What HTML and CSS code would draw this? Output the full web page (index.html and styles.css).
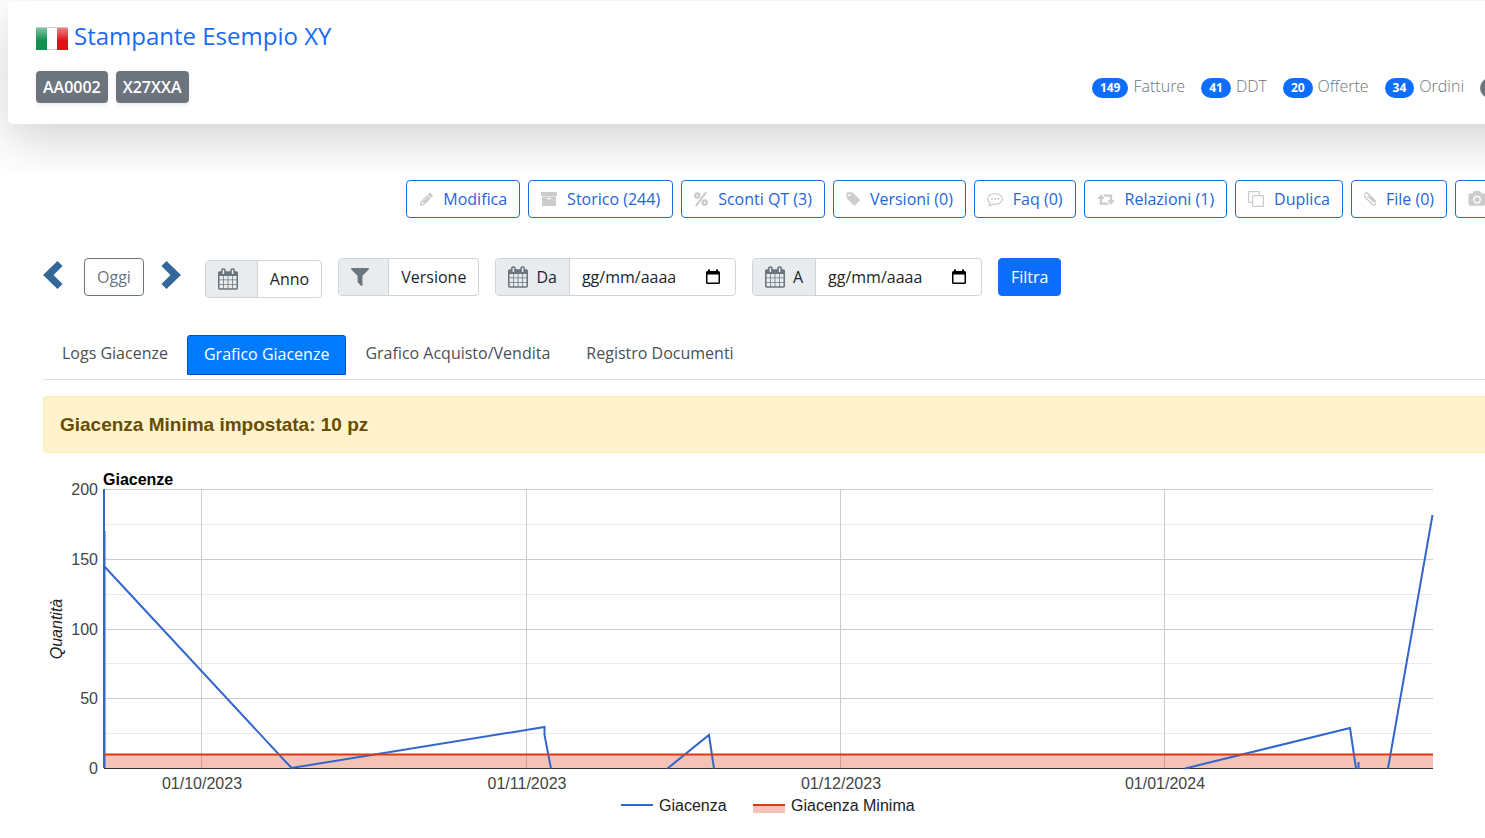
FILE: index.html
```html
<!DOCTYPE html>
<html lang="it">
<head>
<meta charset="utf-8">
<title>Stampante Esempio XY</title>
<link rel="stylesheet" href="styles.css">
</head>
<body>
<header class="top">
  <div class="card">
    <h1 class="title">
      <svg class="flag" viewBox="0 0 32 24" aria-hidden="true">
        <defs>
          <linearGradient id="shine" x1="0" y1="0" x2="0" y2="1">
            <stop offset="0" stop-color="#fff" stop-opacity=".5"/>
            <stop offset=".6" stop-color="#fff" stop-opacity="0"/>
          </linearGradient>
        </defs>
        <rect width="11" height="23" fill="#0f9150"/>
        <rect x="11" width="10" height="23" fill="#fdfdfd"/>
        <rect x="21" width="11" height="23" fill="#dd1218"/>
        <rect width="32" height="23" fill="url(#shine)"/>
        <path d="M0 .5h32M11 22.500h10" stroke="#ccc" fill="none"/>
      </svg>
      <a href="#">Stampante Esempio XY</a>
    </h1>
    <div class="meta">
      <div class="codes"><span class="code">AA0002</span><span class="code">X27XXA</span></div>
      <div class="stats">
        <span class="stat"><b class="pill">149</b>Fatture</span>
        <span class="stat"><b class="pill">41</b>DDT</span>
        <span class="stat"><b class="pill">20</b>Offerte</span>
        <span class="stat"><b class="pill">34</b>Ordini</span>
        <span class="stat"><b class="pill pill-muted"></b></span>
      </div>
    </div>
  </div>
</header>

<nav class="toolbar">
  <button class="tool"><svg class="i14" viewBox="0 0 1664 1792"><path d="M491 1536l91-91-235-235-91 91v107h128v128h107zm523-928q0-22-22-22-10 0-17 7l-542 542q-7 7-7 17 0 22 22 22 10 0 17-7l542-542q7-7 7-17zm-54-192l416 416-832 832h-416v-416zm683 96q0 53-37 90l-166 166-416-416 166-165q36-38 90-38 53 0 91 38l235 234q37 39 37 91z"/></svg>Modifica</button>
  <button class="tool"><svg class="i16" viewBox="0 0 16 16"><path d="M0 1h16v4H0zM1 5.400h14v9.600H1zM6 7v1.200h4V7z" fill-rule="evenodd"/></svg>Storico (244)</button>
  <button class="tool"><svg class="i14" viewBox="0 0 14 16"><g fill="none" stroke="#ccc" stroke-width="2.400"><circle cx="3.300" cy="4.600" r="2.100"/><circle cx="10.700" cy="11.600" r="2.100"/><path d="M11.700 1.800L2.300 14.400" stroke-width="2" stroke-linecap="round"/></g></svg>Sconti QT (3)</button>
  <button class="tool"><svg class="i14" viewBox="64 64 1600 1664"><path d="M576 448q0-53-37.500-90.500t-90.500-37.500-90.500 37.500-37.500 90.500 37.500 90.500 90.500 37.500 90.500-37.500 37.500-90.500zm1067 576q0 53-37 90l-491 492q-39 37-91 37-53 0-90-37l-715-716q-38-37-64.500-101t-26.500-117v-416q0-52 38-90t90-38h416q53 0 117 26.500t102 64.500l715 714q37 39 37 91z"/></svg>Versioni (0)</button>
  <button class="tool"><svg class="i16" viewBox="0 0 16 16"><path d="M8 2.600c4.200 0 7.400 2.400 7.400 5.400s-3.200 5.400-7.400 5.400c-.7 0-1.400-.1-2-.2-1.100.9-2.500 1.400-4 1.500.8-.8 1.200-1.600 1.300-2.600C1.600 11.100.6 9.600.6 8c0-3 3.200-5.400 7.400-5.400z" fill="none" stroke="#ccc" stroke-width="1.200"/><circle cx="4.800" cy="7.800" r="1.100"/><circle cx="8" cy="7.800" r="1.100"/><circle cx="11.200" cy="7.800" r="1.100"/></svg>Faq (0)</button>
  <button class="tool"><svg class="i18" viewBox="0 0 2048 1792"><path d="M1344 1504q0 13-9.500 22.500t-22.500 9.500h-960q-8 0-13.500-2t-9-7-5.500-8-3-11.500-1-11.500v-600h-192q-26 0-45-19t-19-45q0-24 15-41l320-384q19-22 49-22t49 22l320 384q15 17 15 41 0 26-19 45t-45 19h-192v384h576q16 0 25 11l160 192q7 10 7 21zm640-416q0 24-15 41l-320 384q-20 23-49 23t-49-23l-320-384q-15-17-15-41 0-26 19-45t45-19h192v-384h-576q-16 0-25-12l-160-192q-7-9-7-20 0-13 9.500-22.500t22.500-9.500h960q8 0 13.500 2t9 7 5.500 8 3 11.500 1 11.500v600h192q26 0 45 19t19 45z"/></svg>Relazioni (1)</button>
  <button class="tool"><svg class="i16" viewBox="0 0 16 16"><g fill="none" stroke="#ccc" stroke-width="1.200"><path d="M4 11.400H1.200a.6.600 0 0 1-.6-.6V1.200a.6.600 0 0 1 .6-.6h9.600a.6.600 0 0 1 .6.600V4"/><rect x="4.600" y="4.600" width="10.800" height="10.800" rx=".6"/></g></svg>Duplica</button>
  <button class="tool"><svg class="i12" viewBox="1 1 12 14"><path d="M3.200 7.700l5.600 5.600c1.200 1.200 2.700 1.100 3.600.2s.9-2.300-.2-3.400L5.300 3.200C4.200 2.100 2.600 2.100 1.700 3s-.9 2.400.1 3.400M5 5.700l5 5c.9.900 1.900.1 1.200-.8L7.400 6.100M1.800 6.400l1.800 1.800" transform="translate(0 -.4)" fill="none" stroke="#ccc" stroke-width="1.400" stroke-linecap="round"/></svg>File (0)</button>
  <button class="tool" aria-label="Foto"><svg class="i18" viewBox="0 0 1920 1792"><path d="M960 672q119 0 203.500 84.500t84.500 203.500-84.500 203.500-203.500 84.500-203.500-84.500-84.500-203.500 84.500-203.500 203.500-84.500zm704-416q106 0 181 75t75 181v896q0 106-75 181t-181 75h-1408q-106 0-181-75t-75-181v-896q0-106 75-181t181-75h224l51-136q19-49 69.500-84.500t103.500-35.500h512q53 0 103.500 35.500t69.500 84.500l51 136h224zm-704 1152q185 0 316.500-131.500t131.500-316.500-131.500-316.500-316.500-131.500-316.500 131.500-131.500 316.500 131.500 316.500 316.500 131.500z"/></svg></button>
</nav>

<svg class="defs" aria-hidden="true">
  <symbol id="calendar" viewBox="64 0 1664 1792"><path d="M192 1664h288v-288h-288v288zm352 0h320v-288h-320v288zm-352-352h288v-320h-288v320zm352 0h320v-320h-320v320zm-352-384h288v-288h-288v288zm736 736h320v-288h-320v288zm-384-736h320v-288h-320v288zm768 736h288v-288h-288v288zm-384-352h320v-320h-320v320zm-352-864v-288q0-13-9.500-22.500t-22.500-9.500h-64q-13 0-22.500 9.500t-9.500 22.500v288q0 13 9.500 22.500t22.500 9.500h64q13 0 22.500-9.500t9.500-22.500zm736 864h288v-320h-288v320zm-384-384h320v-288h-320v288zm384 0h288v-288h-288v288zm32-480v-288q0-13-9.500-22.500t-22.500-9.500h-64q-13 0-22.500 9.500t-9.500 22.500v288q0 13 9.500 22.500t22.500 9.500h64q13 0 22.500-9.500t9.500-22.500zm384-64v1280q0 52-38 90t-90 38h-1408q-52 0-90-38t-38-90v-1280q0-52 38-90t90-38h128v-96q0-66 47-113t113-47h64q66 0 113 47t47 113v96h384v-96q0-66 47-113t113-47h64q66 0 113 47t47 113v96h128q52 0 90 38t38 90z"/></symbol>
  <symbol id="picker" viewBox="0 0 14 16"><path d="M0 3.500A1.500 1.500 0 0 1 1.500 2H2V.5h2V2h6V.5h2V2h.5A1.500 1.500 0 0 1 14 3.500v10a1.500 1.500 0 0 1-1.500 1.500h-11A1.500 1.500 0 0 1 0 13.500zM1.500 5.500v8h11v-8z" fill-rule="evenodd"/></symbol>
</svg>

<main class="content">
  <form class="filters">
    <div class="pager">
      <button type="button" class="arrow" aria-label="Precedente"><svg viewBox="0 0 20 30"><path d="M14.500 1L19.500 6 10.500 15l9 9-5 5L0 15z"/></svg></button>
      <button type="button" class="today">Oggi</button>
      <button type="button" class="arrow" aria-label="Successivo"><svg viewBox="0 0 20 30"><path d="M5.500 1L.5 6l9 9-9 9 5 5L20 15z"/></svg></button>
    </div>
    <div class="group group-year">
      <span class="addon addon-icon"><svg class="cal"><use href="#calendar"/></svg></span>
      <button type="button" class="pick">Anno</button>
    </div>
    <div class="group">
      <span class="addon addon-icon"><svg class="funnel" viewBox="192 256 1408 1408"><path d="M1595 295q17 41-14 70l-493 493v742q0 42-39 59-13 5-25 5-27 0-45-19l-256-256q-19-19-19-45v-486l-493-493q-31-29-14-70 17-39 59-39h1280q42 0 59 39z"/></svg></span>
      <button type="button" class="pick">Versione</button>
    </div>
    <div class="group">
      <label class="addon" for="from"><svg class="cal"><use href="#calendar"/></svg>Da</label>
      <input class="date" id="from" type="text" placeholder="gg/mm/aaaa">
      <button type="button" class="open" aria-label="Apri calendario"><svg><use href="#picker"/></svg></button>
    </div>
    <div class="group">
      <label class="addon" for="to"><svg class="cal"><use href="#calendar"/></svg>A</label>
      <input class="date" id="to" type="text" placeholder="gg/mm/aaaa">
      <button type="button" class="open" aria-label="Apri calendario"><svg><use href="#picker"/></svg></button>
    </div>
    <button type="submit" class="submit">Filtra</button>
  </form>

  <nav class="tabs">
    <a class="tab" href="#">Logs Giacenze</a>
    <a class="tab active" href="#">Grafico Giacenze</a>
    <a class="tab" href="#">Grafico Acquisto/Vendita</a>
    <a class="tab" href="#">Registro Documenti</a>
  </nav>

  <p class="alert">Giacenza Minima impostata: 10 pz</p>

  <svg class="chart" viewBox="43 466 1442 354" role="img" aria-label="Giacenze">
    <g class="grid-minor"><path d="M104 524.500H1433M104 594.500H1433M104 663.500H1433M104 733.500H1433"/></g>
    <g class="grid"><path d="M104 489.500H1433M104 559.500H1433M104 629.500H1433M104 698.500H1433M201.500 489V768M526.500 489V768M840.500 489V768M1164.500 489V768"/></g>
    <path class="min-area" d="M104 754.500H1433V768.500H104z"/>
    <path class="axis" d="M104 768.500H1433"/>
    <path class="line" d="M104 489V768M104.500 531V768M104 566L291.500 768 544.500 727V735L551 768.500M667.500 768.500L709 735 714 768.500M1185 768.500L1350 728 1356 768.500M1358.500 768.500V762M1388 768.500L1432.500 515"/>
    <path class="min-line" d="M104 754.500H1433"/>
    <text class="chart-title" x="103" y="485">Giacenze</text>
    <g class="labels end">
      <text x="98" y="495">200</text><text x="98" y="565">150</text><text x="98" y="635">100</text><text x="98" y="704">50</text><text x="98" y="774">0</text>
    </g>
    <g class="labels mid">
      <text x="202" y="789">01/10/2023</text><text x="527" y="789">01/11/2023</text><text x="841" y="789">01/12/2023</text><text x="1165" y="789">01/01/2024</text>
    </g>
    <text class="axis-title" transform="translate(62 629) rotate(-90)">Quantità</text>
    <path class="line" d="M621 805H653"/>
    <text class="legend" x="659" y="811">Giacenza</text>
    <path class="min-area" d="M753 805H785V813H753z"/>
    <path class="min-line" d="M753 805H785"/>
    <text class="legend" x="791" y="811">Giacenza Minima</text>
  </svg>
</main>
</body>
</html>
```

FILE: styles.css
```css
* { box-sizing: border-box; }
body {
  margin: 0;
  overflow-x: hidden;
  background: #fff;
  color: #212529;
  font: 400 16px/24px "Open Sans", sans-serif;
}
button, input { font: inherit; color: inherit; margin: 0; }
a { text-decoration: none; }
.defs { position: absolute; width: 0; height: 0; }

.top { overflow: hidden; padding: 1px 0 48px 8px; }
.card {
  margin-right: -52px;
  padding: 19px 28px 21px;
  border-radius: 4px;
  background: #fff;
  box-shadow: 0 16px 48px rgba(0, 0, 0, .175);
}
.title {
  display: flex;
  align-items: center;
  gap: 6px;
  margin: 0 0 19px;
  font-size: 24px;
  font-weight: 500;
  line-height: 32px;
}
.title a { color: #1a6af4; }
.flag { width: 32px; height: 24px; margin-top: 6px; }
.meta { display: flex; justify-content: space-between; align-items: center; }
.codes { display: flex; gap: 8px; }
.code {
  padding: 4px 7px;
  border-radius: 4px;
  background: #6c757d;
  box-shadow: 0 2px 4px rgba(0, 0, 0, .075);
  color: #fff;
  font-size: 16px;
  font-weight: 600;
}
.stats { display: flex; gap: 16px; color: #6c757d; font-weight: 300; padding-bottom: 2px; }
.stat { display: flex; align-items: center; gap: 5px; }
.pill {
  min-width: 29px;
  height: 20px;
  margin-top: 4px;
  padding: 0 8px;
  border-radius: 10px;
  background: #0d6efd;
  color: #fff;
  font-size: 12px;
  font-weight: 700;
  line-height: 20px;
}
.pill-muted { background: #6c757d; }

.toolbar {
  display: flex;
  justify-content: flex-end;
  gap: 8px;
  margin: 8px -15px 40px 0;
}
.tool {
  display: flex;
  flex: none;
  align-items: center;
  gap: 10px;
  padding: 6px 12px;
  border: 1px solid #1f6fd0;
  border-radius: 4px;
  background: #fff;
  color: #2465dc;
  white-space: nowrap;
}
.tool svg { height: 16px; fill: #ccc; }
.tool .i12 { width: 12px; }
.tool .i14 { width: 14px; }
.tool .i16 { width: 16px; }
.tool .i18 { width: 18px; }
.tool:last-child { padding-right: 13px; }

.content { padding-left: 43px; }
.filters { display: flex; align-items: flex-start; gap: 16px; }
.pager { display: flex; align-items: center; gap: 17px; margin-right: 8px; }
.arrow { width: 20px; height: 30px; padding: 0; border: 0; background: none; margin-bottom: 4px; }
.arrow svg { display: block; width: 20px; height: 30px; fill: #369; }
.arrow:first-child { margin-right: 4px; }
.today {
  padding: 6px 12px;
  border: 1px solid #6c757d;
  border-radius: 4px;
  background: #fff;
  color: #6c757d;
}
.group {
  display: flex;
  height: 38px;
  border: 1px solid #ced4da;
  border-radius: 4px;
  background: #fff;
  overflow: hidden;
}
.group-year { margin-top: 2px; }
.addon {
  display: flex;
  align-items: center;
  gap: 8px;
  padding: 0 12px;
  border-right: 1px solid #ced4da;
  background: #e9ecef;
}
.addon-icon { min-width: 50px; }
.group-year .addon-icon { min-width: 52px; }
.cal { width: 20px; height: 22px; fill: #6c757d; }
.funnel { width: 18px; height: 18px; fill: #6c757d; }
.pick { padding: 0 12px; border: 0; background: none; }
.date { width: 130px; padding: 0 12px; border: 0; outline: 0; background: none; }
.date::placeholder { color: #212529; opacity: 1; }
.open { width: 35px; padding: 0 0 0 6px; border: 0; background: none; }
.open svg { display: block; width: 14px; height: 16px; fill: #000; }
.submit {
  padding: 6px 12px;
  border: 1px solid #0d6efd;
  border-radius: 4px;
  background: #0d6efd;
  color: #fff;
}

.tabs {
  display: flex;
  align-items: flex-start;
  gap: 2px;
  margin: 37px 0 16px;
  padding: 0 2px 4px;
  border-bottom: 1px solid #dee2e6;
}
.tab { padding: 5px 16px; border: 1px solid transparent; color: #495057; }
.tab.active {
  padding: 6px 16px 8px;
  border-color: #0550c8;
  border-radius: 3px 3px 0 0;
  background: #007bff;
  color: #fff;
}
.alert {
  margin: 0 0 13px;
  padding: 16px;
  border: 1px solid #ffecb5;
  border-right: 0;
  border-radius: 4px 0 0 4px;
  background: #fff3cd;
  color: #664d03;
  font: 700 19px/23px "Liberation Sans", Arial, sans-serif;
}

.chart {
  display: block;
  width: 100%;
  font: 16px "Liberation Sans", Arial, sans-serif;
  fill: #222;
}
.chart path { fill: none; }
.grid path { stroke: #ccc; }
.grid-minor path { stroke: #ebebeb; }
.chart .line { stroke: #36c; stroke-width: 2; }
.chart .min-line { stroke: #dc3912; stroke-width: 2; }
.chart .min-area { fill: #dc3912; fill-opacity: .3; }
.axis { stroke: #333; }
.chart-title { font-weight: 700; fill: #000; }
.labels { fill: #444; }
.end { text-anchor: end; }
.mid { text-anchor: middle; }
.axis-title { font-style: italic; text-anchor: middle; }
```
